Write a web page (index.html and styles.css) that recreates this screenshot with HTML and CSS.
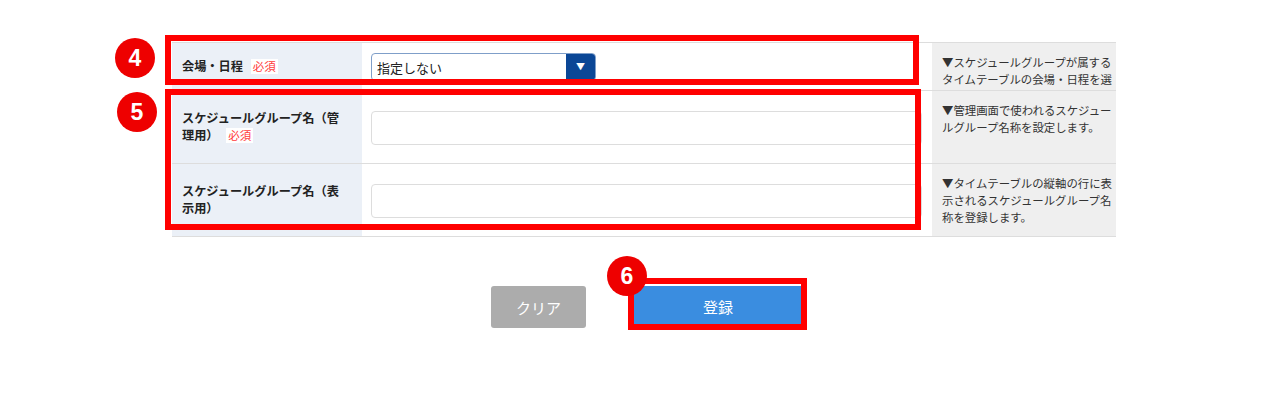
FILE: index.html
```html
<!doctype html>
<html>
  <head>
    <meta charset="utf-8">
    <title>スケジュールグループ登録</title>
    <meta name="viewport" content="width=device-width,initial-scale=1">
    <link rel="stylesheet" href="styles.css">
  </head>
  <body>
    <div class="page">
      <section class="form-wrap">
        <table class="form-table">
          <tr class="row-venue">
            <th>会場・日程 <span class="required">必須</span></th>
            <td class="field">
              <div class="select">
                <span class="select-value">指定しない</span>
                <span class="select-btn">▼</span>
              </div>
            </td>
            <td class="desc"><div class="desc-text">▼スケジュールグループが属するタイムテーブルの会場・日程を選択します。</div></td>
          </tr>
          <tr class="row-name">
            <th>スケジュールグループ名（管理用） <span class="required">必須</span></th>
            <td class="field"><input type="text" class="text-input"></td>
            <td class="desc"><div class="desc-text">▼管理画面で使われるスケジュールグループ名称を設定します。</div></td>
          </tr>
          <tr class="row-name">
            <th>スケジュールグループ名（表示用）</th>
            <td class="field"><input type="text" class="text-input"></td>
            <td class="desc"><div class="desc-text">▼タイムテーブルの縦軸の行に表示されるスケジュールグループ名称を登録します。</div></td>
          </tr>
        </table>
      </section>

      <div class="actions">
        <button class="btn btn-clear">クリア</button>
        <button class="btn btn-submit">登録</button>
      </div>

      <!-- annotations -->
      <div class="mark mark-venue"></div>
      <div class="mark mark-names"></div>
      <div class="mark mark-submit"></div>
      <span class="num num-4">4</span>
      <span class="num num-5">5</span>
      <span class="num num-6">6</span>
    </div>
  </body>
</html>
```

FILE: styles.css
```css
body {
  margin: 0;
  background: #ffffff;
  color: #222222;
  font-family: "Noto Sans CJK JP", "Noto Sans", sans-serif;
}

.page {
  position: relative;
  height: 419px;
  padding-top: 42px;
  box-sizing: border-box;
}

.form-wrap {
  margin-left: 172px;
  width: 944px;
  overflow: hidden;
}

.form-table {
  width: 955px;
  border-collapse: collapse;
  table-layout: fixed;
}

.form-table tr {
  border-top: 1px solid #dddddd;
  border-bottom: 1px solid #dddddd;
}

.form-table th,
.form-table td {
  box-sizing: border-box;
}

.form-table th {
  width: 190px;
  padding: 0 20px 0 10px;
  background: #ebf0f7;
  text-align: left;
  font-size: 12.2px;
  line-height: 17px;
  font-weight: bold;
  color: #222222;
}

.required {
  display: inline-block;
  margin-left: 5px;
  padding: 0 2px;
  background: #ffffff;
  color: #ff3b3b;
  font-size: 11.5px;
  line-height: 15px;
  font-weight: normal;
  vertical-align: top;
  margin-top: 1px;
}

.field {
  width: 570px;
  padding: 0 0 0 9px;
  background: #ffffff;
}

.desc {
  width: 195px;
  padding: 11px 10px 0 10px;
  vertical-align: top;
  background: #efefef;
  font-size: 11.4px;
  line-height: 17px;
  color: #333333;
}

.desc-text {
  max-height: 36px;
  overflow: hidden;
}

.row-name .desc-text {
  max-height: 60px;
}

.row-venue {
  height: 48px;
}

.row-name {
  height: 73px;
}

.select {
  display: flex;
  width: 225px;
  height: 28px;
  box-sizing: border-box;
  border: 1px solid #7f9fc9;
  border-radius: 4px;
  overflow: hidden;
  margin-top: 1px;
}

.select-value {
  flex: 1;
  padding-left: 5px;
  font-size: 13px;
  line-height: 27px;
  color: #222222;
}

.select-btn {
  width: 29px;
  background: #0b4796;
  color: #ffffff;
  font-size: 9px;
  line-height: 26px;
  text-align: center;
}

.text-input {
  display: block;
  width: 551px;
  height: 34px;
  box-sizing: border-box;
  border: 1px solid #dddddd;
  border-radius: 4px;
  background: #ffffff;
  margin-top: 1px;
}

.actions {
  display: flex;
  gap: 48px;
  margin: 49px 0 0 491px;
  align-items: flex-start;
}

.btn {
  border: none;
  color: #ffffff;
  font-family: "Noto Sans CJK JP", sans-serif;
  font-size: 15px;
  padding: 0;
}

.btn-clear {
  width: 95px;
  height: 42px;
  border-radius: 3px;
  background: #acacac;
}

.btn-submit {
  width: 168px;
  height: 40px;
  background: #3a8de0;
}

.mark {
  position: absolute;
  border: 6px solid #ff0000;
  box-sizing: border-box;
}

.mark-venue {
  left: 165px;
  top: 35px;
  width: 754px;
  height: 50px;
}

.mark-names {
  left: 165px;
  top: 89px;
  width: 756px;
  height: 141px;
}

.mark-submit {
  left: 628px;
  top: 278px;
  width: 179px;
  height: 52px;
}

.num {
  position: absolute;
  width: 40px;
  height: 40px;
  border-radius: 50%;
  background: #ee0000;
  color: #ffffff;
  font-family: "Liberation Sans", Arial, sans-serif;
  font-weight: bold;
  font-size: 23px;
  line-height: 40px;
  text-align: center;
}

.num-4 {
  left: 115px;
  top: 38px;
}

.num-5 {
  left: 117px;
  top: 92px;
}

.num-6 {
  left: 607px;
  top: 256px;
}
```
